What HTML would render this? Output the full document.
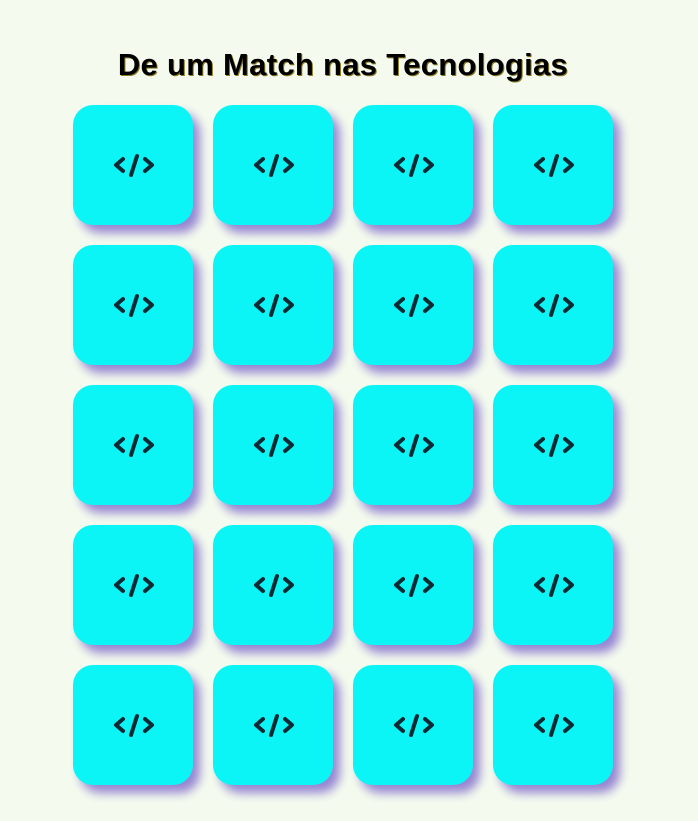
<!DOCTYPE html>
<html><head><style>
html,body{margin:0;padding:0;background:#f4fbee;width:698px;height:821px;overflow:hidden}
h1{position:absolute;left:0;width:686px;top:47px;margin:0;text-align:center;font:bold 31px "Liberation Sans",sans-serif;color:#000;letter-spacing:0.3px;text-shadow:1px 1px 0 #8a7a20}
.c{position:absolute;width:120px;height:120px;border-radius:20px;background:#0cf5f6;box-shadow:7px 8px 10px #9585d2}
.c svg{position:absolute;left:39px;top:48px}
</style></head><body>
<h1>De um Match nas Tecnologias</h1>
<div id="g"></div>
<script>
var s='';
for(var r=0;r<5;r++)for(var k=0;k<4;k++){
s+='<div class="c" style="left:'+(73+k*140)+'px;top:'+(105+r*140)+'px"><svg width="44" height="24" viewBox="0 0 44 24"><g fill="none" stroke="#0b2a33" stroke-width="4" stroke-linecap="round" stroke-linejoin="round"><path d="M11 6 L4 12 L11 18"/><path d="M33 6 L40 12 L33 18"/><path d="M25 3 L19 22"/></g></svg></div>';
}
document.getElementById('g').innerHTML=s;
</script>
</body></html>
